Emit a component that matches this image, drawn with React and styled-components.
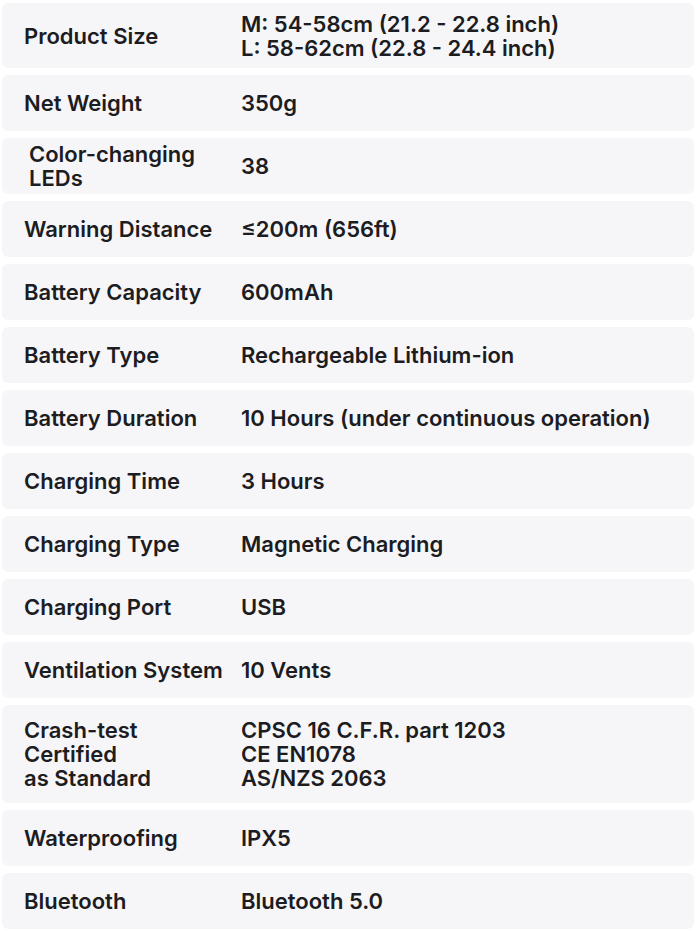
import styled, { createGlobalStyle } from 'styled-components';

const GlobalStyle = createGlobalStyle`
  * { box-sizing: border-box; }
  body {
    margin: 0;
    background: #ffffff;
    font-family: Inter, 'Noto Sans', 'Liberation Sans', sans-serif;
  }
`;

const specs = [
  { label: 'Product Size', value: ['M: 54-58cm (21.2 - 22.8 inch)', 'L: 58-62cm (22.8 - 24.4 inch)'], tall: 65 },
  { label: 'Net Weight', value: ['350g'] },
  { label: ['Color-changing', 'LEDs'], value: ['38'], indent: true },
  { label: 'Warning Distance', value: ['≤200m (656ft)'] },
  { label: 'Battery Capacity', value: ['600mAh'] },
  { label: 'Battery Type', value: ['Rechargeable Lithium-ion'] },
  { label: 'Battery Duration', value: ['10 Hours (under continuous operation)'] },
  { label: 'Charging Time', value: ['3 Hours'] },
  { label: 'Charging Type', value: ['Magnetic Charging'] },
  { label: 'Charging Port', value: ['USB'] },
  { label: 'Ventilation System', value: ['10 Vents'] },
  {
    label: ['Crash-test', 'Certified', 'as Standard'],
    value: ['CPSC 16 C.F.R. part 1203', 'CE EN1078', 'AS/NZS 2063'],
    tall: 98,
  },
  { label: 'Waterproofing', value: ['IPX5'] },
  { label: 'Bluetooth', value: ['Bluetooth 5.0'] },
];

const SpecsTable = () => {
  return (
    <Wrapper>
      <GlobalStyle />
      {specs.map((row, i) => {
        const labels = Array.isArray(row.label) ? row.label : [row.label];
        return (
          <Row key={i} $height={row.tall}>
            <Label $indent={row.indent}>
              {labels.map((l) => (
                <span key={l}>{l}</span>
              ))}
            </Label>
            <Value>
              {row.value.map((v) => (
                <span key={v}>{v}</span>
              ))}
            </Value>
          </Row>
        );
      })}
    </Wrapper>
  );
};

const Wrapper = styled.div`
  display: flex;
  flex-direction: column;
  gap: 7px;
  padding: 3px 2px 1px 2px;
  width: 696px;
`;

const Row = styled.div`
  display: grid;
  grid-template-columns: 239px 1fr;
  align-items: center;
  height: ${(p) => p.$height || 56}px;
  background: #f6f6f9;
  border-radius: 6px;
  color: #1c1c21;
  font-size: 22px;
  font-weight: 600;
  line-height: 24px;
  white-space: nowrap;
`;

const Label = styled.div`
  display: flex;
  flex-direction: column;
  padding-left: ${(p) => (p.$indent ? 27 : 22)}px;
`;

const Value = styled.div`
  display: flex;
  flex-direction: column;
`;

export default SpecsTable;
